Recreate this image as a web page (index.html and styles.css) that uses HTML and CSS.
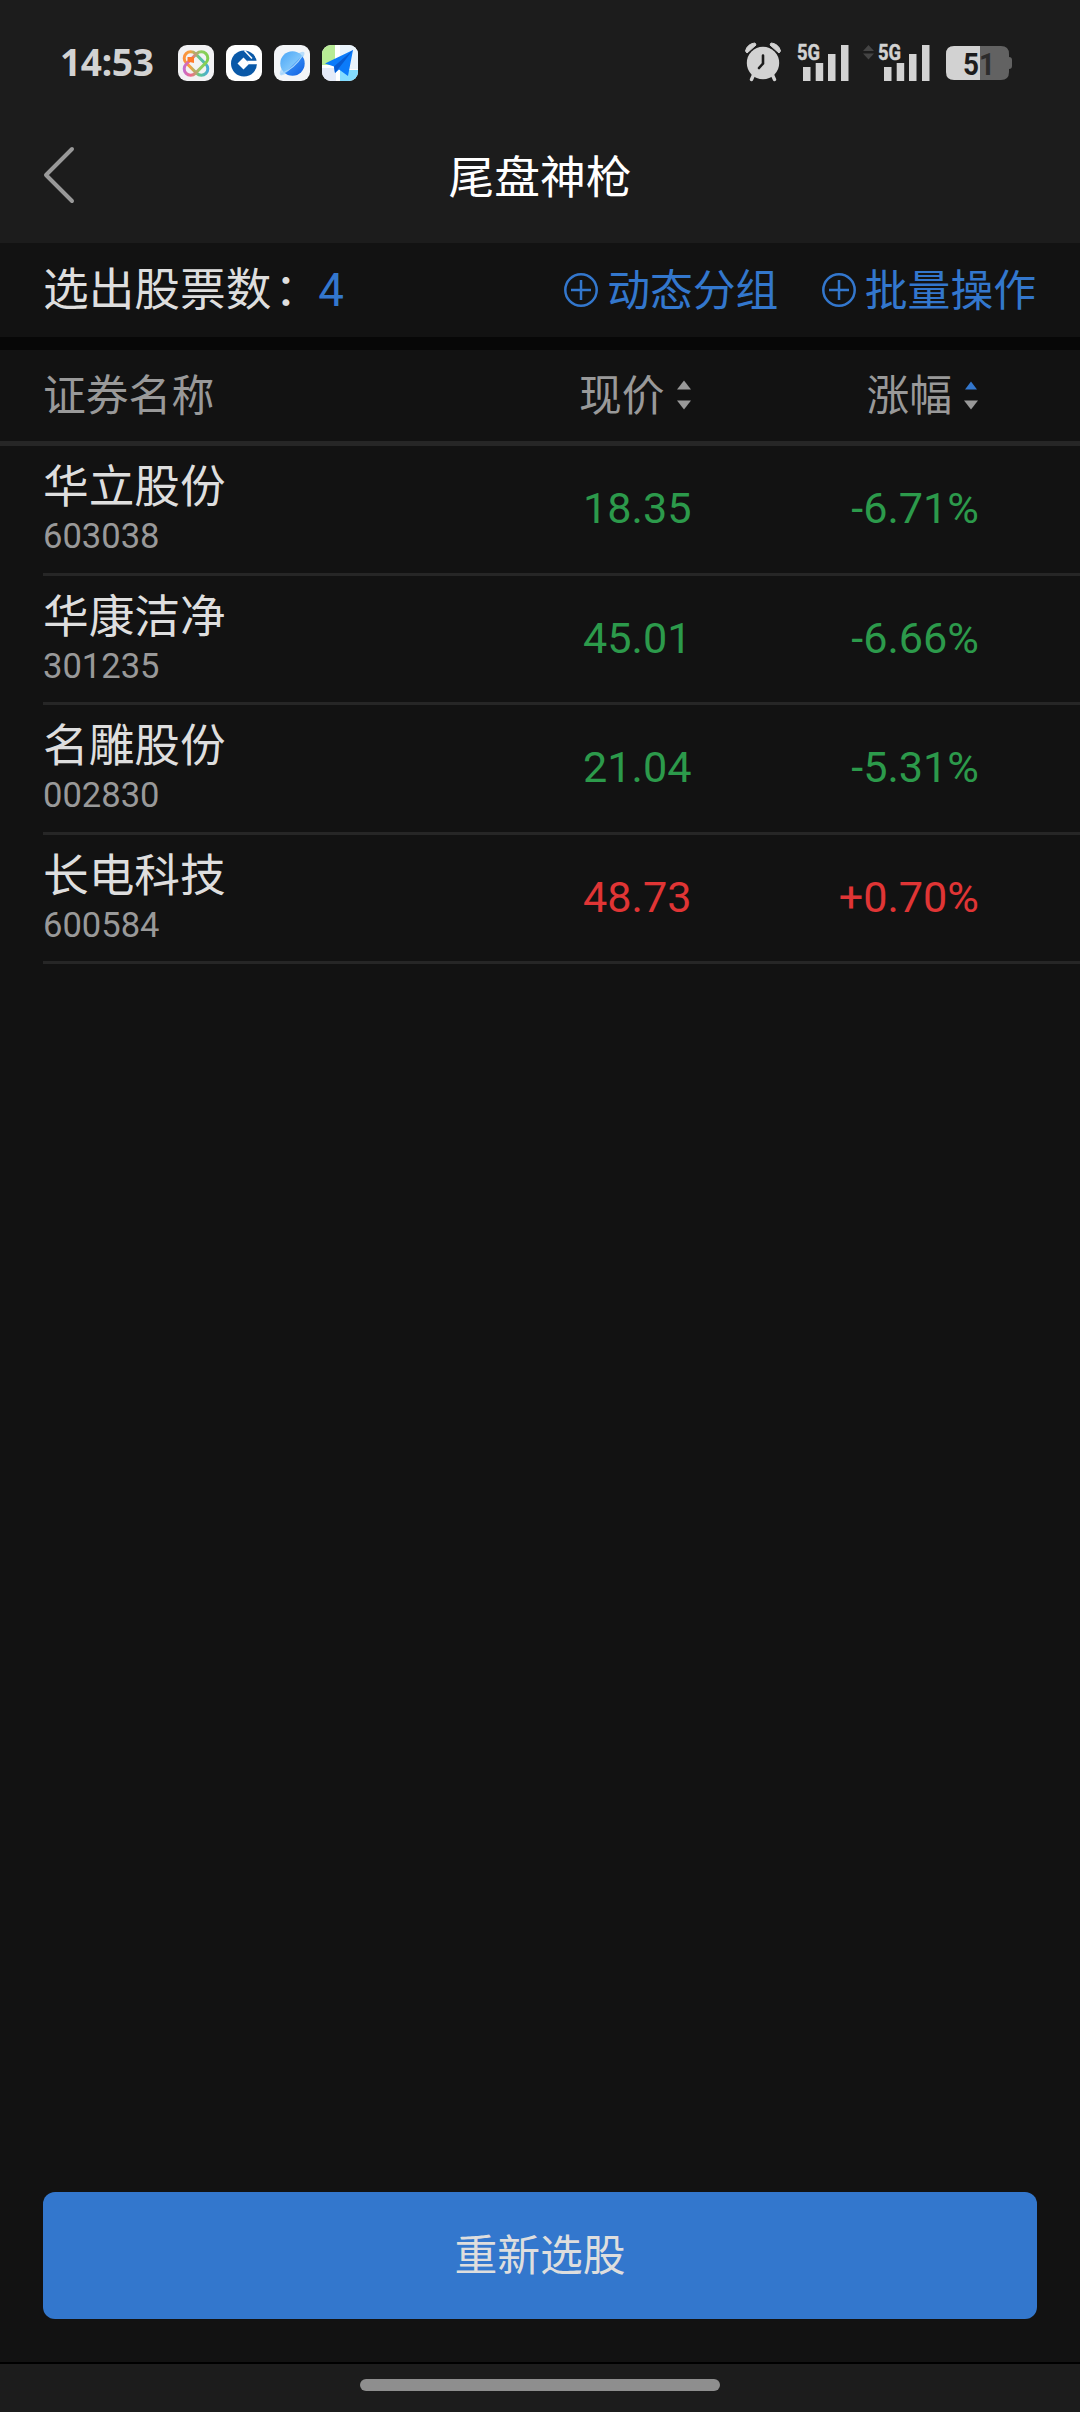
FILE: index.html
```html
<!DOCTYPE html>
<html lang="zh-CN">
<head>
<meta charset="utf-8">
<title>尾盘神枪</title>
<link rel="stylesheet" href="styles.css">
</head>
<body>
<div class="screen">
  <header class="top">
    <div class="status">
      <span class="clock">14:53</span>
      <div class="apps">
        <svg class="app" width="36" height="36" viewBox="0 0 36 36">
          <defs>
            <linearGradient id="ring" gradientUnits="userSpaceOnUse" x1="7" y1="8" x2="29" y2="30"><stop offset="0" stop-color="#ff8a3a"/><stop offset=".3" stop-color="#f5a040"/><stop offset=".6" stop-color="#5cc890"/><stop offset="1" stop-color="#3f9cf5"/></linearGradient>
            <linearGradient id="ring2" gradientUnits="userSpaceOnUse" x1="29" y1="8" x2="7" y2="30"><stop offset="0" stop-color="#7ccf4a"/><stop offset=".35" stop-color="#8fcf60"/><stop offset=".65" stop-color="#f06a8a"/><stop offset="1" stop-color="#b070f0"/></linearGradient>
          </defs>
          <rect width="36" height="36" rx="9" fill="#f2f2f4"/>
          <g fill="none" stroke-width="3">
            <rect x="11.500" y="4.500" width="13" height="28" rx="6.500" transform="rotate(-45 18 18.500)" stroke="url(#ring)"/>
            <rect x="11.500" y="4.500" width="13" height="28" rx="6.500" transform="rotate(45 18 18.500)" stroke="url(#ring2)"/>
          </g>
          <path d="M9.500 12H16V18L9.500 16.500Z" fill="#ff7a2a"/>
        </svg>
        <svg class="app" width="36" height="36" viewBox="0 0 36 36">
          <rect width="36" height="36" rx="9" fill="#fff"/>
          <circle cx="18" cy="18.500" r="13" fill="#0a59a8"/>
          <path d="M17.500 12.500L23.500 18.500L17.500 24.500L11.500 18.500Z" fill="#fff"/>
          <path d="M18.500 5.500L26 13.500" stroke="#fff" stroke-width="1.500"/>
          <path d="M21 15.800H32V19.200H23Z" fill="#fff"/>
        </svg>
        <svg class="app" width="36" height="36" viewBox="0 0 36 36">
          <defs><linearGradient id="globe" x1="0" y1="0" x2="1" y2="1"><stop offset="0" stop-color="#4aa5f6"/><stop offset=".52" stop-color="#7cc4fb"/><stop offset=".58" stop-color="#2b80f0"/><stop offset="1" stop-color="#1260e0"/></linearGradient></defs>
          <rect width="36" height="36" rx="9" fill="#f3f5f8"/>
          <path d="M25 8Q31 5 30.500 9Q29 14 22 21Q12 30 7 30.500Q4 29 8 23" fill="#b9ddfb"/>
          <circle cx="18.500" cy="18.500" r="12.200" fill="url(#globe)"/>
          <path d="M7 29Q20 24 29 10" fill="none" stroke="#a5d5fc" stroke-width="1.200"/>
        </svg>
        <svg class="app" width="36" height="36" viewBox="0 0 36 36">
          <defs><clipPath id="tile"><rect width="36" height="36" rx="9"/></clipPath></defs>
          <g clip-path="url(#tile)">
            <rect width="36" height="36" fill="#fff"/>
            <path d="M0 0H13V20H0Z" fill="#b8eb95"/>
            <path d="M18 0H36V24H18Z" fill="#e9f3fb"/>
            <path d="M0 23H14V36H0Z" fill="#e5ebf8"/>
            <path d="M18 25H36V36H18Z" fill="#83dcff"/>
            <path d="M31 5L3 18.500L12 21.500L13 28L17 24.500L26 31Z" fill="#0b7bfa"/>
            <path d="M31 5L12 21.500L13 28L17 23Z" fill="#075bd2"/>
          </g>
        </svg>
      </div>
      <div class="indicators">
        <svg width="38" height="40" viewBox="0 0 38 40">
          <path d="M1.500 9A10 10 0 0 1 11 1L12 3L3 11ZM36.500 9A10 10 0 0 0 27 1L26 3L35 11Z" fill="#d2d2d2" stroke="#d2d2d2" stroke-linejoin="round"/>
          <circle cx="19" cy="21" r="16.200" fill="#d2d2d2"/>
          <path d="M9.500 33L7.500 37.500M28.500 33L30.500 37.500" stroke="#d2d2d2" stroke-width="3.400" stroke-linecap="round"/>
          <path d="M19 13.500V21.500L15 26" fill="none" stroke="#1c1c1c" stroke-width="2.600" stroke-linecap="round"/>
        </svg>
        <svg class="signal" width="52" height="38" viewBox="0 0 52 38">
          <text class="net" x="0" y="17" textLength="23" lengthAdjust="spacingAndGlyphs">5G</text>
          <path d="M6 24h7.500v14H6zM18.700 20h7.500v18h-7.500zM31 11h7.500v27H31zM44 2h7.500v36H44z" fill="#d2d2d2"/>
        </svg>
        <svg class="updown" width="11" height="38" viewBox="0 0 11 38"><path d="M0 8L5.500 2L11 8ZM0 10.500H11L5.500 16.500Z" fill="#444"/></svg>
        <svg class="signal2" width="52" height="38" viewBox="0 0 52 38">
          <text class="net" x="0" y="17" textLength="23" lengthAdjust="spacingAndGlyphs">5G</text>
          <path d="M6 24h7.500v14H6zM18.700 20h7.500v18h-7.500zM31 11h7.500v27H31zM44 2h7.500v36H44z" fill="#d2d2d2"/>
        </svg>
        <svg class="battery" width="66" height="34" viewBox="0 0 66 34">
          <path d="M34 0H55Q63 0 63 8V11Q66 11 66 14V20Q66 23 63 23V26Q63 34 55 34H34Z" fill="#626262"/>
          <path d="M34 0H8Q0 0 0 8V26Q0 34 8 34H34Z" fill="#d2d2d2"/>
          <text class="level" x="17" y="28.500" textLength="32" lengthAdjust="spacingAndGlyphs">5<tspan fill="#2c2c2c">1</tspan></text>
        </svg>
      </div>
    </div>
    <nav class="nav">
      <svg class="back" width="32" height="58" viewBox="0 0 32 58"><path d="M29 3L3 29L29 55" fill="none" stroke="#999" stroke-width="4" stroke-linecap="round" stroke-linejoin="round"/></svg>
      <h1 class="title">尾盘神枪</h1>
    </nav>
  </header>

  <section class="summary">
    <div class="total">选出股票数<span class="colon">：</span><span class="count">4</span></div>
    <div class="actions">
      <a class="action"><svg width="34" height="34" viewBox="0 0 34 34"><path d="M17 7V27M7 17H27" stroke="#3377cd" stroke-width="2.500"/><circle cx="17" cy="17" r="15.700" fill="none" stroke="#3377cd" stroke-width="2.500"/></svg>动态分组</a>
      <a class="action"><svg width="34" height="34" viewBox="0 0 34 34"><path d="M17 7V27M7 17H27" stroke="#3377cd" stroke-width="2.500"/><circle cx="17" cy="17" r="15.700" fill="none" stroke="#3377cd" stroke-width="2.500"/></svg>批量操作</a>
    </div>
  </section>

  <div class="grid head">
    <span>证券名称</span>
    <span class="sort">现价<svg width="14" height="30" viewBox="0 0 14 30"><path d="M0 9.500L7 0.500L14 9.500Z" fill="#999"/><path d="M0 20.500H14L7 29.500Z" fill="#999"/></svg></span>
    <span class="sort">涨幅<svg width="14" height="30" viewBox="0 0 14 30"><path d="M1 9.500L7 1.500L13 9.500Z" fill="#3377cd"/><path d="M0 20.500H14L7 29.500Z" fill="#999"/></svg></span>
  </div>

  <main class="list">
    <div class="grid row down"><div class="stock"><span class="name">华立股份</span><span class="code">603038</span></div><span class="num">18.35</span><span class="num">-6.71%</span></div>
    <div class="grid row down"><div class="stock"><span class="name">华康洁净</span><span class="code">301235</span></div><span class="num">45.01</span><span class="num">-6.66%</span></div>
    <div class="grid row down"><div class="stock"><span class="name">名雕股份</span><span class="code">002830</span></div><span class="num">21.04</span><span class="num">-5.31%</span></div>
    <div class="grid row up"><div class="stock"><span class="name">长电科技</span><span class="code">600584</span></div><span class="num">48.73</span><span class="num">+0.70%</span></div>
  </main>

  <button class="again">重新选股</button>
  <footer class="home"><div class="pill"></div></footer>
</div>
</body>
</html>
```
FILE: styles.css
```css
* { box-sizing: border-box; }
body { margin: 0; background: #121212; }
svg { display: block; flex: none; overflow: visible; }

.screen {
  display: flex;
  flex-direction: column;
  width: 1080px;
  height: 2412px;
  background: #121212;
  color: #dedede;
  font-family: Roboto, "Noto Sans CJK SC", sans-serif;
  font-size: 42.8px;
  line-height: 54px;
}

.top { height: 243px; background: #1c1c1c; }

.status {
  display: flex;
  align-items: center;
  height: 125px;
  padding: 0 68px 0 60px;
}
.clock {
  width: 118px;
  margin-top: -2px;
  font: 700 37px/40px "Noto Sans", Roboto, sans-serif;
  color: #d2d2d2;
  letter-spacing: -0.3px;
}
.apps { display: flex; gap: 12px; }
.indicators { display: flex; align-items: center; margin: -2px 0 0 auto; }
.signal { margin-left: 15px; }
.updown { margin-left: 14px; }
.signal2 { margin-left: 4px; }
.battery { margin: 2px 0 0 16px; }
.net { font: 700 22.500px Roboto, sans-serif; fill: #d2d2d2; stroke: #d2d2d2; stroke-width: 0.5px; }
.level { font: 700 31px Roboto, sans-serif; fill: #1c1c1c; }

.nav {
  display: grid;
  grid-template-columns: 120px 1fr 120px;
  align-items: center;
  height: 108px;
}
.back { margin: -8px 0 0 43px; }
.title {
  margin: 0;
  color: #fff;
  font-size: 45.8px;
  font-weight: 400;
  text-align: center;
}

.summary {
  display: flex;
  justify-content: space-between;
  align-items: center;
  height: 94px;
  padding: 2px 44px 0 43px;
}
.total { font-size: 45.7px; }
.colon { margin: 0 -2px 0 3px; }
.count { color: #3377cd; }
.actions { display: flex; gap: 43.500px; }
.action {
  display: flex;
  align-items: center;
  gap: 9px;
  color: #3377cd;
}
.action svg { margin-top: -3px; }

.grid {
  display: grid;
  grid-template-columns: 1fr 287px 287.500px;
  align-items: center;
}
.head {
  height: 109px;
  padding: 1px 101px 0 43px;
  border-top: 13px solid #070707;
  border-bottom: 5px solid #262626;
  color: #999;
}
.sort {
  display: flex;
  justify-content: flex-end;
  align-items: center;
  gap: 12px;
  padding-right: 1px;
}
.sort svg { margin-top: -2px; }

.list { flex: 1; }
.row {
  height: 129.600px;
  margin-left: 43px;
  padding-right: 101px;
  border-bottom: 3px solid #262626;
}
.stock { display: flex; flex-direction: column; }
.name { font-size: 45.7px; line-height: 54px; }
.code { color: #999; font-size: 34.56px; line-height: 42px; }
.num { font-size: 43.2px; text-align: right; }
.down .num { color: #2c9a4b; }
.up .num { color: #e03535; }

.again {
  height: 127px;
  margin: 0 43px 43px;
  padding: 0;
  border: 0;
  border-radius: 12px;
  background: #3377cd;
  color: #dedede;
  font: inherit;
}

.home {
  display: flex;
  justify-content: center;
  height: 50px;
  padding-top: 15px;
  border-top: 2px solid #000;
  background: #1c1c1c;
}
.pill { width: 360px; height: 12px; border-radius: 6px; background: #8e8e8e; }
```
